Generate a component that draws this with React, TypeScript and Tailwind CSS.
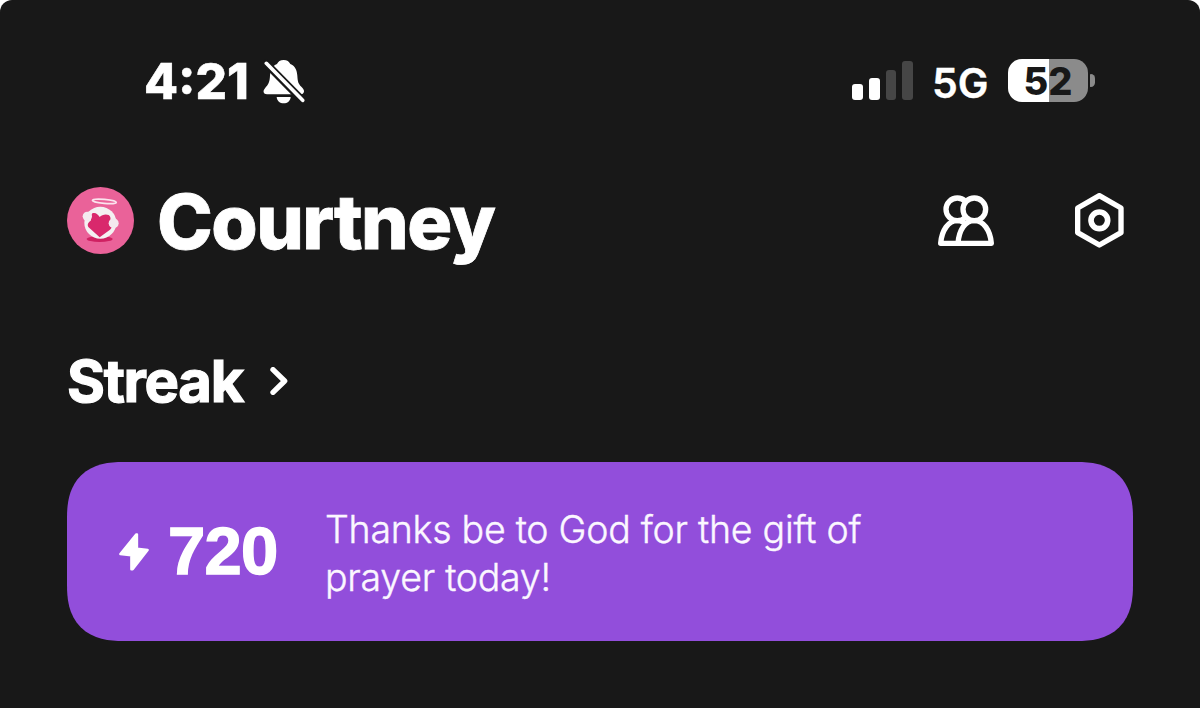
/** Profile header: phone status bar, user name with actions, and the streak card. */

function BellOffIcon() {
  return (
    <svg viewBox="0 0 126 135" className="h-[45px] w-[42px]">
      <path
        d="M62 3C52 3 45 8 42 15C28 20 22 34 21 50C20 70 16 76 7 86C2 92 1 96 2 100C3 104 6 106 12 106H112C118 106 122 103 123 98C124 93 120 88 115 83C106 74 104 68 103 50C102 34 96 20 82 15C79 8 72 3 62 3Z"
        fill="#fff"
      />
      <path d="M41 114H83C82 126 73 133 62 133C51 133 42 126 41 114Z" fill="#fff" />
      <path d="M2 6L126 132" stroke="#181818" strokeWidth="23" />
      <path d="M10 13L119 124" stroke="#fff" strokeWidth="11" strokeLinecap="round" />
    </svg>
  );
}

function Signal() {
  return (
    <div className="mt-[61px] flex h-[39px] items-end gap-[6px]">
      <span className="h-[16px] w-[10.7px] rounded-[3px] bg-white" />
      <span className="h-[22px] w-[10.7px] rounded-[3px] bg-white" />
      <span className="h-[30px] w-[10.7px] rounded-[3px] bg-[#464646]" />
      <span className="h-[39px] w-[10.7px] rounded-[3px] bg-[#464646]" />
    </div>
  );
}

function Battery() {
  return (
    <div className="mt-[59px] flex items-center gap-[2px]">
      <div className="flex h-[43px] w-[80px] items-center justify-center rounded-[14px] bg-[linear-gradient(90deg,#fff_41px,#8b8b8b_41px)]">
        <span className="text-[38px] leading-none font-extrabold text-[#181818]">52</span>
      </div>
      <span className="h-[13px] w-[5px] rounded-r-[5px] rounded-l-[1px] bg-[#8b8b8b]" />
    </div>
  );
}

function Avatar() {
  return (
    <svg viewBox="0 0 201 201" className="mt-[25px] h-[67px] w-[67px]">
      <circle cx="100.5" cy="100.5" r="100.5" fill="#ea6299" />
      <ellipse cx="98" cy="156" rx="39" ry="9" fill="#cf2162" />
      <ellipse cx="112" cy="43" rx="36" ry="6" transform="rotate(5 112 43)" fill="none" stroke="#fbe4ee" strokeWidth="5" />
      <circle cx="100" cy="107" r="48" fill="#f4f0f2" />
      <path
        d="M98 151L64 120C59 110 67 105 72 100C73 91 71 84 76 79C85 75 93 82 98 90C104 84 115 80 125 84C133 89 129 97 132 104C140 112 135 122 128 129Z"
        fill="#d9286c"
      />
      <circle cx="61" cy="88" r="14" fill="#f4e9ef" />
      <circle cx="140" cy="109" r="15" fill="#f4e9ef" />
    </svg>
  );
}

function FriendsIcon() {
  return (
    <svg
      viewBox="0 0 168 154"
      className="mt-[33px] h-[51.3px] w-[56px]"
      fill="#181818"
      stroke="#fff"
      strokeWidth="16"
      strokeLinejoin="round"
    >
      <path d="M8 145C11 106 31 77 58 77C85 77 100 106 108 145Z" />
      <circle cx="58" cy="43" r="34" />
      <path d="M60 145C63 106 81 77 109 77C137 77 157 106 160 145Z" />
      <circle cx="109" cy="43" r="34" />
    </svg>
  );
}

function SettingsIcon() {
  return (
    <svg
      viewBox="0 0 146 164"
      className="mt-[31px] h-[54.7px] w-[48.7px]"
      fill="none"
      stroke="#fff"
      strokeWidth="16"
      strokeLinejoin="round"
    >
      <path d="M73 8L138 45V119L73 156L8 119V45Z" />
      <circle cx="73" cy="82" r="25" strokeWidth="17" />
    </svg>
  );
}

function StreakCard() {
  return (
    <div className="mx-[67px] mt-[51px] flex h-[179px] rounded-[56px] bg-[#924edb] [corner-shape:superellipse(1.3)]">
      <svg viewBox="0 0 90 114" className="mt-[70.5px] ml-[52px] h-[38px] w-[30px] shrink-0">
        <path
          d="M52 4L4 63L37 67L37 109L41 109L86 51L54 47L54 4Z"
          fill="#fff"
          stroke="#fff"
          strokeWidth="7"
          strokeLinejoin="round"
        />
      </svg>
      <span className="mt-[55px] ml-[19px] w-[108px] font-['Liberation_Sans',sans-serif] text-[67px] leading-none font-bold tracking-[-0.7px] [-webkit-text-stroke:1.4px_#fff]">
        720
      </span>
      <p className="mt-[44px] ml-[49px] w-[560px] text-[37.5px] leading-[48px] font-light tracking-[-0.25px] text-[#fbf7ff] [-webkit-text-stroke:0.4px_#fbf7ff]">
        Thanks be to God for the gift of
        <br />
        prayer today!
      </p>
    </div>
  );
}

export default function App() {
  return (
    <div className="h-[708px] w-[1200px] overflow-hidden bg-white font-['Inter',sans-serif] text-white">
      <div className="h-full rounded-t-[12px] bg-[#181818]">
        <div className="flex h-[162px] items-start">
          <span className="mt-[57px] ml-[144px] w-[119px] text-[49.5px] leading-none font-extrabold [-webkit-text-stroke:0.5px_#fff]">
            4:21
          </span>
          <div className="mt-[59px]">
            <BellOffIcon />
          </div>
          <div className="mr-[105px] ml-auto flex items-start">
            <Signal />
            <span className="mt-[62.5px] ml-[19px] w-[76px] text-[41px] leading-none font-semibold [-webkit-text-stroke:0.4px_#fff]">
              5G
            </span>
            <Battery />
          </div>
        </div>

        <div className="flex h-[182px] items-start pr-[76px] pl-[67px]">
          <Avatar />
          <h1 className="mt-[22px] ml-[23px] text-[75px] leading-none font-extrabold tracking-[-1.5px] [-webkit-text-stroke:0.8px_#fff]">
            Courtney
          </h1>
          <div className="ml-auto flex items-start gap-[81px]">
            <FriendsIcon />
            <SettingsIcon />
          </div>
        </div>

        <div className="flex h-[67px] items-start pl-[67px]">
          <h2 className="mt-[8px] w-[203px] text-[58px] leading-none font-bold tracking-[-1.3px] [-webkit-text-stroke:1.2px_#fff]">
            Streak
          </h2>
          <svg viewBox="0 0 54 84" className="mt-[23px] h-[28px] w-[18px]">
            <path
              d="M9 8L44 42L9 76"
              fill="none"
              stroke="#fff"
              strokeWidth="16"
              strokeLinecap="round"
              strokeLinejoin="round"
            />
          </svg>
        </div>

        <StreakCard />
      </div>
    </div>
  );
}
